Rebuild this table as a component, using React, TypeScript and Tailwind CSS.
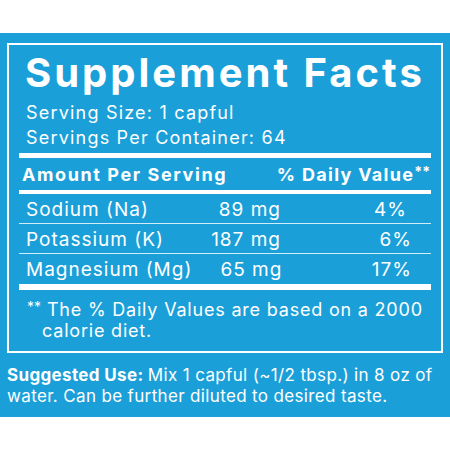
import React from "react";

const rows = [
    { name: "Sodium (Na)", amount: "89 mg", dv: "4%", pr: "pr-[5px]" },
    { name: "Potassium (K)", amount: "187 mg", dv: "6%", pr: "" },
    { name: "Magnesium (Mg)", amount: "65 mg", dv: "17%", pr: "" },
];

const App = () => {
    return (
        <div className="w-[450px] h-[450px] bg-white pt-[33px] text-white font-['Inter',sans-serif]">
            <div className="bg-[#1b9fd9] h-[384px] px-[7px] pt-[10px]">
                <div className="border-2 border-white h-[310px] px-[10px]">
                    <h1 className="mt-[6px] pl-[6px] text-[40px] leading-[44px] font-bold tracking-[3px]">
                        Supplement Facts
                    </h1>
                    <div className="mt-[5px] pl-[7px] text-[18px] leading-[25px] tracking-[1.2px]">
                        <p>Serving Size: 1 capful</p>
                        <p>Servings Per Container: 64</p>
                    </div>
                    <div className="mt-[3px] h-[5px] bg-white" />
                    <div className="mt-[2px] h-[30px] flex justify-between items-center pl-[3px] pr-[1px] text-[18px] leading-[30px] font-bold tracking-[1.6px]">
                        <span>Amount Per Serving</span>
                        <span className="tracking-[1.3px]">
                            % Daily Value<span className="text-[14px] align-[4px] leading-none tracking-normal">**</span>
                        </span>
                    </div>
                    <div className="h-[4px] bg-white" />
                    {rows.map((r, i) => (
                        <div key={r.name}>
                            <div className="h-[29px] pt-[3px] pr-[19px] flex text-[19px] leading-[26px] tracking-[1px] whitespace-nowrap">
                                <span className="flex-1 pl-[7px]">{r.name}</span>
                                <span className="w-[91px] text-right">{r.amount}</span>
                                <span className={`w-[131px] text-right ${r.pr}`}>{r.dv}</span>
                            </div>
                            {i < rows.length - 1 && <div className="h-px bg-white/80" />}
                        </div>
                    ))}
                    <div className="mt-[1px] h-[6px] bg-white" />
                    <p className="mt-[9px] pl-[23px] -indent-[15px] text-[18px] leading-[21px] tracking-[0.8px]">
                        <span className="text-[14px] align-[4px] leading-none tracking-normal">**</span> The % Daily Values are based on a 2000 calorie diet.
                    </p>
                </div>
                <div className="mt-[12px] text-[17px] leading-[21px] tracking-[0.35px] whitespace-nowrap">
                    <p>
                        <span className="font-bold">Suggested Use: </span>
                        <span>Mix 1 capful (~1/2 tbsp.) in 8 oz of</span>
                    </p>
                    <p>water. Can be further diluted to desired taste.</p>
                </div>
            </div>
        </div>
    );
};

export default App;
